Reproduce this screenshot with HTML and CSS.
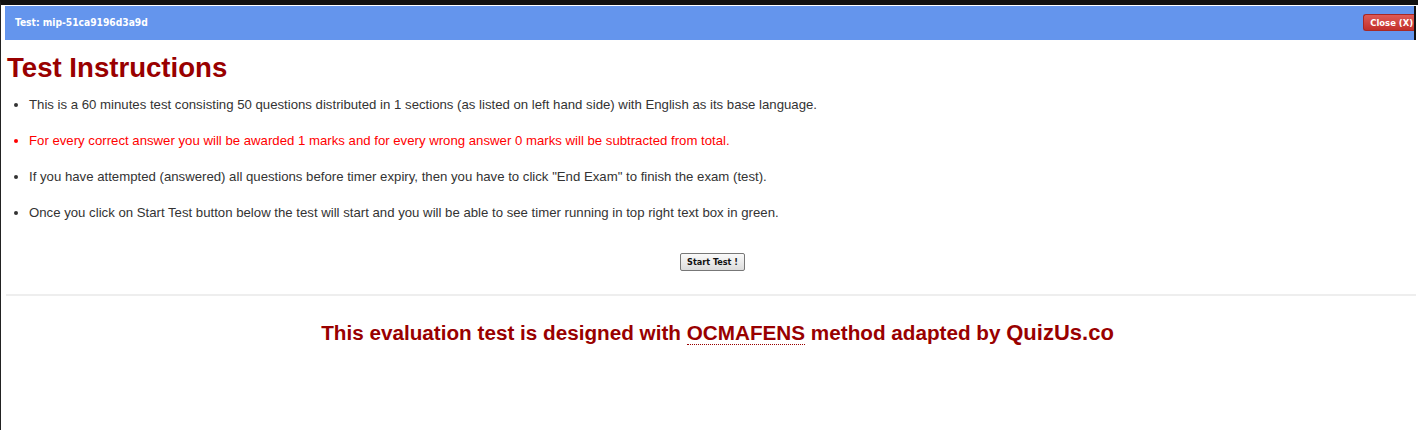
FILE: index.html
```html
<!DOCTYPE html>
<html>
<head>
<meta charset="utf-8">
<link rel="stylesheet" href="styles.css">
</head>
<body>
<div class="frame">
  <div class="header">
    <span class="title">Test: mip-51ca9196d3a9d</span>
    <button class="close">Close (X)</button>
  </div>
  <div class="content">
    <h1>Test Instructions</h1>
    <ul class="rules">
      <li>This is a 60 minutes test consisting 50 questions distributed in 1 sections (as listed on left hand side) with English as its base language.</li>
      <li class="warn">For every correct answer you will be awarded 1 marks and for every wrong answer 0 marks will be subtracted from total.</li>
      <li>If you have attempted (answered) all questions before timer expiry, then you have to click "End Exam" to finish the exam (test).</li>
      <li>Once you click on Start Test button below the test will start and you will be able to see timer running in top right text box in green.</li>
    </ul>
    <div class="actions"><button class="start">Start Test !</button></div>
    <hr class="sep">
    <p class="footer">This evaluation test is designed with <abbr>OCMAFENS</abbr> method adapted by <span class="brand">QuizUs.co</span></p>
  </div>
</div>
</body>
</html>
```
FILE: styles.css
```css
html, body {
  margin: 0;
  padding: 0;
  background: #fff;
  height: 100%;
}
body {
  border-top: 5px solid #111;
  border-left: 1px solid #222;
  box-sizing: border-box;
  font-family: "Liberation Sans", Arial, sans-serif;
}
.frame {
  padding: 1px 2px 0 4px;
}
.header {
  background: #6495ed;
  height: 34px;
  display: flex;
  align-items: center;
  justify-content: space-between;
  padding-left: 10px;
  border-right: 2px solid #111;
}
.title {
  color: #fff;
  font-family: "DejaVu Sans Condensed", "DejaVu Sans", Verdana, sans-serif;
  font-weight: bold;
  font-size: 10.2px;
  margin-top: -2px;
}
.close {
  font-family: "DejaVu Sans Condensed", "DejaVu Sans", Verdana, sans-serif;
  font-weight: bold;
  font-size: 9.4px;
  color: #fff;
  background: linear-gradient(#de5b56, #c22f2a);
  border: 1px solid #a82824;
  border-right: 0;
  border-radius: 3px 0 0 3px;
  height: 17px;
  padding: 0 1px 0 6px;
  margin-top: -2px;
  white-space: nowrap;
  text-align: left;
}
.content {
  padding: 0;
}
h1 {
  color: #990000;
  font-size: 27.6px;
  font-weight: bold;
  margin: 12px 0 0 2px;
  line-height: 32px;
}
.rules {
  margin: 12px 0 0 0;
  padding: 0 0 0 24px;
  list-style: disc;
  color: #333;
  font-size: 13.2px;
}
.rules li {
  line-height: 18px;
  margin-bottom: 18px;
}
.rules li.warn {
  color: #ff0000;
}
.actions {
  display: flex;
  justify-content: center;
  padding-left: 4px;
  margin-top: 31px;
}
.start {
  font-family: "DejaVu Sans Condensed", "DejaVu Sans", Verdana, sans-serif;
  font-weight: bold;
  font-size: 9px;
  color: #111;
  background: linear-gradient(#fafafa, #dcdcdc);
  border: 1px solid #777;
  border-radius: 2px;
  height: 18px;
  padding: 0 6px;
}
.sep {
  border: 0;
  border-top: 2px solid #eee;
  margin: 23px 0 0 1px;
}
.footer {
  text-align: center;
  color: #990000;
  font-weight: bold;
  font-size: 20.7px;
  margin: 24px 0 0 0;
  padding-left: 14px;
}
.footer abbr {
  text-decoration: none;
  border-bottom: 1px dotted #990000;
}
.brand {
  font-size: 22px;
}
```
